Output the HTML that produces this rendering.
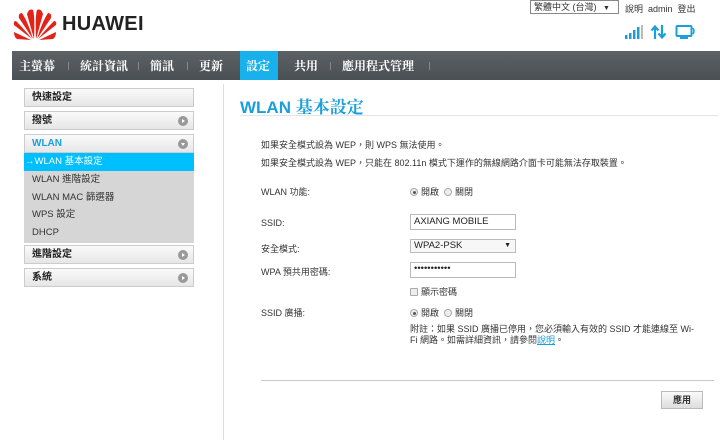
<!DOCTYPE html>
<html><head><meta charset="utf-8"><style>
*{margin:0;padding:0;box-sizing:border-box}
body{width:720px;height:440px;background:#fff;font-family:"Liberation Sans","Noto Sans CJK TC",sans-serif;font-size:9px;color:#333;position:relative;overflow:hidden}
.a{position:absolute}
.nav{left:12px;top:51px;width:708px;height:29px;background:linear-gradient(#5b6165,#4a5054)}
.nav span{position:absolute;top:0;height:29px;line-height:29px;color:#fff;font-size:12px;font-weight:bold;font-family:"Noto Serif CJK SC","Noto Sans CJK TC",serif}
.sep{position:absolute;top:11px;width:1px;height:8px;background:#888}
.sb{left:24px;width:170px;height:19px;border:1px solid #ccc;background:linear-gradient(#fafafa,#e6e6e6);font-size:10px;font-weight:bold;line-height:17px;padding-left:7px;color:#222}
.ci{position:absolute;right:5px;top:4px;width:10px;height:10px;border-radius:50%;background:#999}
.ci:after{content:"";position:absolute;left:4px;top:2.5px;border-left:3px solid #fff;border-top:2.5px solid transparent;border-bottom:2.5px solid transparent}
.sub{left:24px;width:170px;height:18px;line-height:18px;padding-left:8px;font-size:9.5px;color:#333}
.lbl{left:261px;font-size:9px;color:#333}
.inp{left:410px;width:106px;height:16px;border:1px solid #bbb;font-size:9.5px;line-height:14px;padding-left:3px;color:#222}
.rad{display:inline-block;width:8px;height:8px;border-radius:50%;border:1px solid #aaa;background:#eee;vertical-align:-1px;margin-right:3px;position:relative}
.rad.on:after{content:"";position:absolute;left:1.5px;top:1.5px;width:3px;height:3px;border-radius:50%;background:#555}
</style></head><body>
<svg class="a" style="left:13px;top:8px" width="44" height="32" viewBox="0 0 44 32">
<g fill="#e2231a">
<path d="M21 31 L14 6 Q16 0 20 2 Q22 8 21 31 Z"/><path d="M23 31 L30 6 Q28 0 24 2 Q22 8 23 31 Z"/>
<path d="M20 31 L6 10 Q5 5 9 5 Q15 14 20 31 Z"/><path d="M24 31 L38 10 Q39 5 35 5 Q29 14 24 31 Z"/>
<path d="M19 31 L1 17 Q0 13 3 13 Q11 21 19 31 Z"/><path d="M25 31 L43 17 Q44 13 41 13 Q33 21 25 31 Z"/>
<path d="M18 32 L1 24 Q1 29 4 31 Z"/><path d="M26 32 L43 24 Q43 29 40 31 Z"/>
</g></svg>
<div class="a" style="left:62px;top:13px;font-size:20px;font-weight:bold;color:#222;letter-spacing:0.3px">HUAWEI</div>
<div class="a" style="left:530px;top:0px;width:89px;height:14px;border:1px solid #888;font-size:9px;line-height:12px;padding-left:3px">繁體中文 (台灣) <span style="font-size:7px;margin-left:4px">▼</span></div>
<div class="a" style="left:625px;top:2px;font-size:9px">說明 &nbsp;admin &nbsp;登出</div>
<svg class="a" style="left:624px;top:24px" width="80" height="16">
<g fill="#1a9fdc"><rect x="1" y="11" width="2.5" height="4"/><rect x="5" y="9" width="2.5" height="6"/><rect x="9" y="6" width="2.5" height="9"/><rect x="13" y="3" width="2.5" height="12"/><rect x="17" y="1" width="2" height="14" fill="#bbb"/>
<path d="M31 15V3M27.5 6.5l3.5-4 3.5 4M38 1v12M34.5 9.5l3.5 4 3.5-4" stroke="#1a9fdc" stroke-width="2.2" fill="none"/>
<rect x="52.5" y="2" width="15" height="10" rx="1" fill="none" stroke="#1a9fdc" stroke-width="2"/><rect x="56" y="13" width="8" height="2"/><path d="M69 4q2 3 0 6" stroke="#1a9fdc" fill="none" stroke-width="1.5"/></g></svg>
<div class="a nav">
<span style="left:7px">主螢幕</span><i class="sep" style="left:56px"></i>
<span style="left:68px">統計資訊</span><i class="sep" style="left:126px"></i>
<span style="left:138px">簡訊</span><i class="sep" style="left:175px"></i>
<span style="left:187px">更新</span>
<span style="left:228px;width:38px;background:#18b1eb;padding-left:6px">設定</span>
<span style="left:282px">共用</span><i class="sep" style="left:318px"></i>
<span style="left:330px">應用程式管理</span><i class="sep" style="left:417px"></i>
</div>
<div class="a" style="left:223px;top:84px;width:1px;height:356px;background:#ddd"></div>
<div class="a sb" style="top:88px">快速設定</div>
<div class="a sb" style="top:111px">撥號<i class="ci"></i></div>
<div class="a sb" style="top:134px;color:#1a9fdc">WLAN<i class="ci" style="transform:rotate(90deg)"></i></div>
<div class="a" style="left:24px;top:153px;width:170px;height:90px;background:#d6d6d6"></div>
<div class="a sub" style="top:153px;background:#00bfff;color:#fff;padding-left:1px">→WLAN 基本設定</div>
<div class="a sub" style="top:171px">WLAN 進階設定</div>
<div class="a sub" style="top:189px">WLAN MAC 篩選器</div>
<div class="a sub" style="top:206px">WPS 設定</div>
<div class="a sub" style="top:224px">DHCP</div>
<div class="a sb" style="top:245px">進階設定<i class="ci"></i></div>
<div class="a sb" style="top:268px">系統<i class="ci"></i></div>
<div class="a" style="left:240px;top:93px;font-size:17px;color:#1a9fdc;font-weight:bold">WLAN <span style="font-family:'Noto Serif CJK SC',serif">基本設定</span></div>
<div class="a" style="left:240px;top:115px;width:478px;height:1px;background:#e4e4e4"></div>
<div class="a" style="left:261px;top:138px">如果安全模式設為 WEP，則 WPS 無法使用。</div>
<div class="a" style="left:261px;top:156px">如果安全模式設為 WEP，只能在 802.11n 模式下運作的無線網路介面卡可能無法存取裝置。</div>
<div class="a lbl" style="top:185px">WLAN 功能:</div>
<div class="a" style="left:410px;top:185px"><i class="rad on"></i>開啟 &nbsp;<i class="rad"></i>關閉</div>
<div class="a lbl" style="top:218px">SSID:</div>
<div class="a inp" style="top:214px">AXIANG MOBILE</div>
<div class="a lbl" style="top:242px">安全模式:</div>
<div class="a inp" style="top:239px;height:14px;line-height:12px;background:#f7f7f7">WPA2-PSK<span style="position:absolute;right:4px;font-size:7px">▼</span></div>
<div class="a lbl" style="top:265px">WPA 預共用密碼:</div>
<div class="a inp" style="top:262px;line-height:12px">•••••••••••</div>
<div class="a" style="left:410px;top:285px"><i class="rad" style="border-radius:1px"></i>顯示密碼</div>
<div class="a lbl" style="top:306px">SSID 廣播:</div>
<div class="a" style="left:410px;top:306px"><i class="rad on"></i>開啟 &nbsp;<i class="rad"></i>關閉</div>
<div class="a" style="left:410px;top:324px;line-height:11px;width:290px">附註：如果 SSID 廣播已停用，您必須輸入有效的 SSID 才能連線至 Wi-<br>Fi 網路。如需詳細資訊，請參閱<span style="color:#1a9fdc;text-decoration:underline">說明</span>。</div>
<div class="a" style="left:261px;top:380px;width:453px;height:1px;background:#c8c8c8"></div>
<div class="a" style="left:661px;top:391px;width:42px;height:18px;border:1px solid #bbb;background:linear-gradient(#fafafa,#ddd);text-align:center;line-height:16px;font-weight:bold;font-size:9px">應用</div>
</body></html>
